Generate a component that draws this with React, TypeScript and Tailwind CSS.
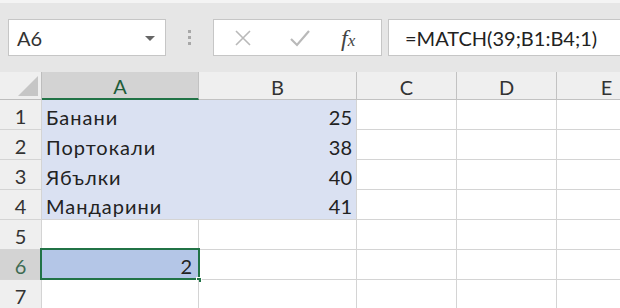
import React from "react";

const font = { fontFamily: "Lato, 'Noto Sans', 'Liberation Sans', sans-serif" };

const cols = ["A", "B", "C", "D", "E"];
const colWidths = ["w-[157px]", "w-[158px]", "w-[100px]", "w-[100px]", "w-[100px]"];

const data: Record<number, [string, string]> = {
  1: ["Банани", "25"],
  2: ["Портокали", "38"],
  3: ["Ябълки", "40"],
  4: ["Мандарини", "41"],
};

function Toolbar() {
  return (
    <div className="h-[72px] shrink-0 border-t-[3px] border-[#f4f4f4] bg-[#e6e6e6] pt-[16px]">
      <div className="flex h-[37px] items-stretch">
        {/* name box */}
        <div className="ml-[8px] flex w-[158px] items-center justify-between border border-[#c6c6c6] bg-white pl-[8px] pr-[10px] text-[20px] text-[#333]">
          <span>А6</span>
          <span className="mt-[2px] h-0 w-0 border-x-[5px] border-t-[5px] border-x-transparent border-t-[#666]" />
        </div>
        {/* grip dots */}
        <div className="flex w-[47px] flex-col items-center justify-center gap-[3px]">
          <span className="h-[3px] w-[3px] bg-[#a8a8a8]" />
          <span className="h-[3px] w-[3px] bg-[#a8a8a8]" />
          <span className="h-[3px] w-[3px] bg-[#a8a8a8]" />
        </div>
        {/* cancel / enter / fx */}
        <div className="flex w-[169px] items-center border border-[#c6c6c6] bg-white">
          <svg width="18" height="18" viewBox="0 0 18 18" className="ml-[20px]">
            <path d="M2 2 L16 16 M16 2 L2 16" stroke="#b9b9b9" strokeWidth="1.6" fill="none" />
          </svg>
          <svg width="22" height="18" viewBox="0 0 22 18" className="ml-[37px]">
            <path d="M2 10 L8 16 L20 2" stroke="#b9b9b9" strokeWidth="2.2" fill="none" />
          </svg>
          <span
            className="ml-[30px] text-[24px] italic leading-none text-[#444]"
            style={{ fontFamily: "'Liberation Serif', serif" }}
          >
            f<span className="text-[17px]">x</span>
          </span>
        </div>
        {/* formula input */}
        <div className="ml-[6px] flex flex-1 items-center border border-r-0 border-[#c6c6c6] bg-white pl-[16px] text-[20px] text-[#222]">
          =MATCH(39;B1:B4;1)
        </div>
      </div>
    </div>
  );
}

function Corner() {
  return (
    <div className="relative h-[28px] w-[42px] shrink-0 border-b border-r border-[#bdbdbd] bg-[#efefef]">
      <div className="absolute bottom-[3px] right-[3px] h-0 w-0 border-b-[20px] border-l-[20px] border-b-[#c6c6c6] border-l-transparent" />
    </div>
  );
}

function Grid() {
  const rows = [1, 2, 3, 4, 5, 6, 7];
  return (
    <div className="flex flex-col">
      <div className="flex">
        <Corner />
        {cols.map((c, i) => (
          <div
            key={c}
            className={`flex h-[28px] shrink-0 items-center justify-center border-r pt-[2px] text-[20px] ${colWidths[i]} ${
              c === "A"
                ? "border-b-2 border-[#c2c2c2] border-b-[#217346] bg-[#d3d3d3] text-[#1e5c39]"
                : "border-b border-[#c2c2c2] bg-[#efefef] text-[#333]"
            }`}
          >
            {c}
          </div>
        ))}
      </div>
      {rows.map((r) => {
        const sel = r <= 4;
        const nextSel = r + 1 <= 4;
        return (
          <div key={r} className="flex">
            <div
              className={`flex h-[30px] w-[42px] shrink-0 items-center justify-center border-b border-r border-[#d4d4d4] pt-[3px] text-[20px] ${
                r === 6 ? "bg-[#d3d3d3] text-[#3d6b52]" : "bg-[#efefef] text-[#333]"
              }`}
            >
              {r}
            </div>
            {/* A */}
            <div
              className={`relative flex h-[30px] w-[157px] shrink-0 items-center px-[4px] pt-[3px] text-[20px] text-[#222] ${
                sel ? "bg-[#dae1f2]" : r === 6 ? "bg-[#b4c6e7]" : "bg-white"
              } ${nextSel ? "" : "border-b border-[#d4d4d4]"} ${sel ? "" : "border-r border-[#d4d4d4]"}`}
            >
              {sel && <span className="tracking-[1px]">{data[r][0]}</span>}
              {r === 6 && (
                <>
                  <span className="ml-auto pr-[2px]">2</span>
                  <div className="pointer-events-none absolute -left-[2px] -top-[2px] h-[32px] w-[160px] border-2 border-[#217346]" />
                  <div className="absolute -bottom-[4px] -right-[4px] h-[6px] w-[6px] border border-white bg-[#217346]" />
                </>
              )}
            </div>
            {/* B */}
            <div
              className={`flex h-[30px] w-[158px] shrink-0 items-center justify-end border-r border-[#d4d4d4] px-[4px] pt-[3px] text-[20px] text-[#222] ${
                sel ? "bg-[#dae1f2]" : "bg-white"
              } ${nextSel ? "" : "border-b"}`}
            >
              {sel && data[r][1]}
            </div>
            {[0, 1, 2].map((k) => (
              <div
                key={k}
                className="h-[30px] w-[100px] shrink-0 border-b border-r border-[#d4d4d4] bg-white"
              />
            ))}
          </div>
        );
      })}
    </div>
  );
}

export default function App() {
  return (
    <div className="h-[308px] w-[620px] overflow-hidden bg-white" style={font}>
      <Toolbar />
      <Grid />
    </div>
  );
}
